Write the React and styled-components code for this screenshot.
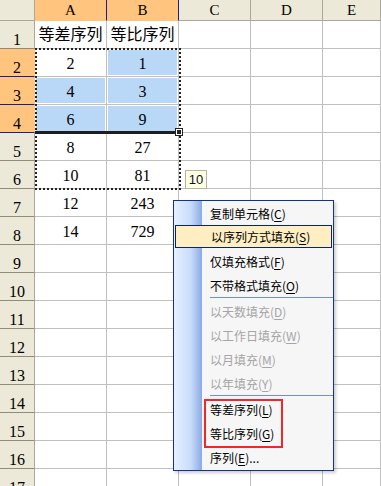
import React from 'react';
import styled, { createGlobalStyle } from 'styled-components';

const GlobalStyle = createGlobalStyle`
  * { box-sizing: border-box; }
  body { margin: 0; background: #fff; }
`;

// 시트 데이터: 1행은 제목, 나머지는 숫자
const rows = [
  ['等差序列', '等比序列'],
  ['2', '1'],
  ['4', '3'],
  ['6', '9'],
  ['8', '27'],
  ['10', '81'],
  ['12', '243'],
  ['14', '729'],
];
const ROW_COUNT = 17;
const COLS = ['A', 'B', 'C', 'D', 'E'];
const selectedRows = [2, 3, 4];
// 파란 선택 영역 (A2는 활성 셀이라 흰색)
const isFilled = (r, c) => selectedRows.includes(r) && c < 2 && !(r === 2 && c === 0);

const menuItems = [
  { label: '复制单元格', key: 'C' },
  { label: '以序列方式填充', key: 'S', active: true },
  { label: '仅填充格式', key: 'F' },
  { label: '不带格式填充', key: 'O' },
  'sep',
  { label: '以天数填充', key: 'D', disabled: true },
  { label: '以工作日填充', key: 'W', disabled: true },
  { label: '以月填充', key: 'M', disabled: true },
  { label: '以年填充', key: 'Y', disabled: true },
  'sep',
  { label: '等差序列', key: 'L', marked: true },
  { label: '等比序列', key: 'G', marked: true },
  { label: '序列', key: 'E', tail: '...' },
];

function App() {
  const marked = menuItems.filter((m) => m !== 'sep' && m.marked);
  const before = menuItems.slice(0, menuItems.indexOf(marked[0]));
  const after = menuItems.slice(menuItems.indexOf(marked[marked.length - 1]) + 1);

  const renderItem = (m, i) =>
    m === 'sep' ? (
      <Separator key={'s' + i} />
    ) : (
      <Item key={m.label} $active={m.active} $disabled={m.disabled}>
        {m.label}(<u>{m.key}</u>){m.tail}
      </Item>
    );

  return (
    <Sheet>
      <GlobalStyle />
      <Grid>
        <Corner />
        {COLS.map((c, i) => (
          <ColHead key={c} $sel={i < 2}>
            {c}
          </ColHead>
        ))}
        {Array.from({ length: ROW_COUNT }, (_, idx) => {
          const r = idx + 1;
          const data = rows[idx] || [];
          return (
            <React.Fragment key={r}>
              <RowHead $sel={selectedRows.includes(r)}>{r}</RowHead>
              {COLS.map((c, ci) => (
                <Cell key={c} $fill={isFilled(r, ci)} $title={r === 1}>
                  {data[ci] || ''}
                </Cell>
              ))}
            </React.Fragment>
          );
        })}
      </Grid>

      <Marquee />
      <FillBar />
      <Handle />
      <Tip>10</Tip>

      <Menu>
        {before.map(renderItem)}
        <MarkGroup>
          {marked.map(renderItem)}
          <RedMark />
        </MarkGroup>
        {after.map(renderItem)}
      </Menu>
    </Sheet>
  );
}

const Sheet = styled.div`
  position: relative;
  width: 381px;
  height: 486px;
  overflow: hidden;
  background: #fff;
`;

const Grid = styled.div`
  display: grid;
  grid-template-columns: 35px 72px 72px 72px 72px 58px;
  grid-template-rows: 21px repeat(${ROW_COUNT}, 28px);
`;

const Corner = styled.div`
  background: #ece9d8;
  border-right: 1px solid #aca899;
  border-bottom: 1px solid #aca899;
`;

const ColHead = styled.div`
  display: flex;
  align-items: center;
  justify-content: center;
  background: ${(p) => (p.$sel ? '#ffc47e' : '#ece9d8')};
  border-right: 1px solid ${(p) => (p.$sel ? '#1c1c94' : '#aca899')};
  border-bottom: 1px solid ${(p) => (p.$sel ? '#ffc47e' : '#aca899')};
  font: 15px 'Liberation Serif', serif;
  color: #000;
`;

const RowHead = styled.div`
  display: flex;
  align-items: flex-end;
  justify-content: center;
  background: ${(p) => (p.$sel ? '#ffc47e' : '#ece9d8')};
  border-right: 1px solid ${(p) => (p.$sel ? '#ffc47e' : '#aca899')};
  border-bottom: 1px solid ${(p) => (p.$sel ? '#1c1c94' : '#8f8c78')};
  font: 16px/16px 'Liberation Serif', serif;
  color: #000;
`;

const Cell = styled.div`
  display: flex;
  align-items: flex-end;
  justify-content: center;
  padding-bottom: ${(p) => (p.$title ? '5px' : '4px')};
  background: ${(p) => (p.$fill ? '#b9d8f8' : '#fff')};
  box-shadow: ${(p) => (p.$fill ? 'inset 0 0 0 1px #fff' : 'none')};
  border-right: 1px solid #c0c0c0;
  border-bottom: 1px solid #c0c0c0;
  font: 16px/16px 'Liberation Serif', 'Noto Sans CJK SC', serif;
  color: #000;
  white-space: nowrap;
`;

const Marquee = styled.div`
  position: absolute;
  left: 35px;
  top: 48px;
  width: 146px;
  height: 142px;
  border: 2px dotted #222;
  pointer-events: none;
`;

const FillBar = styled.div`
  position: absolute;
  left: 35px;
  top: 131px;
  width: 142px;
  height: 3px;
  background: #1e1e1e;
`;

const Handle = styled.div`
  position: absolute;
  left: 176px;
  top: 129px;
  width: 6px;
  height: 6px;
  background: #222;
  border: 1px solid #fff;
  outline: 1px solid #222;
`;

const Tip = styled.div`
  position: absolute;
  left: 185px;
  top: 170px;
  width: 22px;
  height: 19px;
  display: flex;
  align-items: center;
  justify-content: center;
  background: #ffffe1;
  border: 1px solid #b4b4a0;
  font: 13px 'Liberation Sans', sans-serif;
  color: #101030;
`;

const Menu = styled.div`
  position: absolute;
  left: 173px;
  top: 200px;
  width: 161px;
  height: 271px;
  border: 1px solid #10309a;
  background: linear-gradient(to right, #e6f0ff, #c8dcfa 60%, #8aaae2) 0 0 / 28px 100% no-repeat,
    #f6f6f6;
  box-shadow: 2px 2px 3px rgba(0, 0, 0, 0.2);
  display: flex;
  flex-direction: column;
  font: 12px 'Noto Sans CJK SC', sans-serif;
`;

const Item = styled.div`
  display: flex;
  align-items: center;
  height: ${(p) => (p.$active ? '23px' : '24px')};
  margin: ${(p) => (p.$active ? '0 1px 1px' : '0')};
  padding-left: ${(p) => (p.$active ? '35px' : '36px')};
  background: ${(p) => (p.$active ? '#ffeec2' : 'transparent')};
  border: ${(p) => (p.$active ? '1px solid #0a246a' : 'none')};
  color: ${(p) => (p.$disabled ? '#a5a5a5' : '#000')};
  white-space: nowrap;

  u {
    text-underline-offset: 2px;
  }
`;

const Separator = styled.div`
  height: 2px;
  margin-left: 36px;
  border-top: 1px solid #6f8fd0;
`;

const MarkGroup = styled.div`
  position: relative;
`;

const RedMark = styled.div`
  position: absolute;
  left: 30px;
  top: 2px;
  width: 79px;
  height: 49px;
  border: 2px solid #f02828;
  pointer-events: none;
`;

export default App;
